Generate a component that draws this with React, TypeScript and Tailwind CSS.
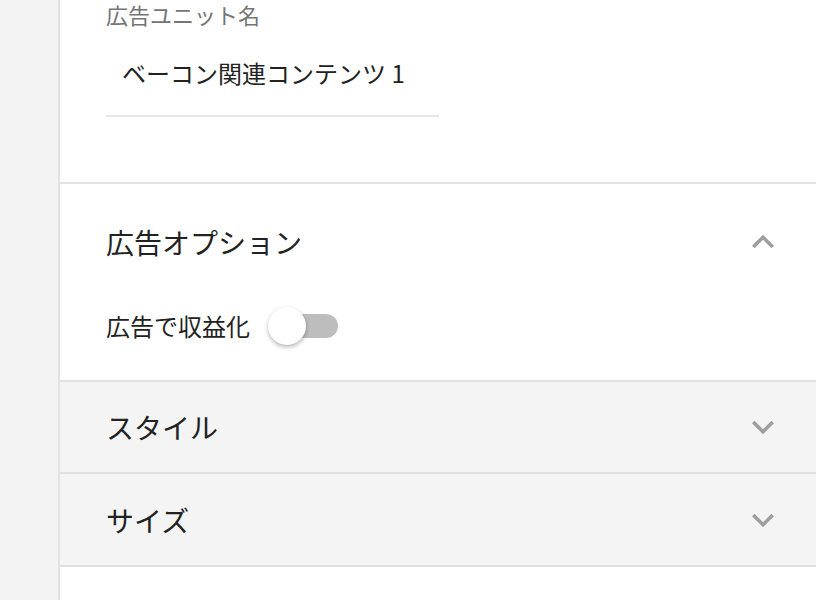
const font = { fontFamily: '"Noto Sans CJK JP", "Noto Sans", sans-serif' };

function Chevron({ up }: { up?: boolean }) {
  return (
    <svg viewBox="0 0 24 24" className="w-[44px] h-[44px] fill-[#9e9e9e]">
      {up ? (
        <path d="M12 8l-6 6 1.41 1.41L12 10.83l4.59 4.58L18 14z" />
      ) : (
        <path d="M16.59 8.59L12 13.17 7.41 8.59 6 10l6 6 6-6z" />
      )}
    </svg>
  );
}

function Toggle() {
  return (
    <div className="relative w-[70px] h-[38px] flex items-center">
      <div className="ml-[8px] w-[62px] h-[24px] rounded-full bg-[#bdbdbd]" />
      <div className="absolute left-0 top-0 w-[38px] h-[38px] rounded-full bg-white shadow-[0_2px_4px_rgba(0,0,0,0.3)]" />
    </div>
  );
}

export default function App() {
  return (
    <div className="flex h-[600px] overflow-hidden bg-white" style={font}>
      <div className="w-[60px] shrink-0 bg-[#f3f3f3] border-r-2 border-[#e2e2e2]" />
      <div className="flex-1 flex flex-col">
        <div className="h-[184px] border-b-2 border-[#e2e2e2] pl-[46px]">
          <div className="text-[22px] leading-[28px] text-[#757575]">広告ユニット名</div>
          <div className="w-[333px] mt-[30px] h-[59px] border-b-2 border-[#e6e6e6] pl-[16px] text-[24px] leading-[30px] text-[#222]">
            ベーコン関連コンテンツ 1
          </div>
        </div>
        <div className="h-[198px] border-b-2 border-[#e2e2e2] pl-[46px] pr-[31px]">
          <div className="flex items-center justify-between mt-[36px] h-[44px]">
            <span className="text-[28px] text-[#222]">広告オプション</span>
            <Chevron up />
          </div>
          <div className="flex items-center gap-[18px] mt-[42px] h-[40px]">
            <span className="text-[24px] text-[#222]">広告で収益化</span>
            <Toggle />
          </div>
        </div>
        <div className="h-[92px] bg-[#f4f4f4] border-b-2 border-[#e0e0e0] pl-[46px] pr-[31px] flex items-center justify-between">
          <span className="text-[28px] text-[#222]">スタイル</span>
          <Chevron />
        </div>
        <div className="h-[93px] bg-[#f4f4f4] border-b-2 border-[#e0e0e0] pl-[46px] pr-[31px] flex items-center justify-between">
          <span className="text-[28px] text-[#222]">サイズ</span>
          <Chevron />
        </div>
      </div>
    </div>
  );
}
